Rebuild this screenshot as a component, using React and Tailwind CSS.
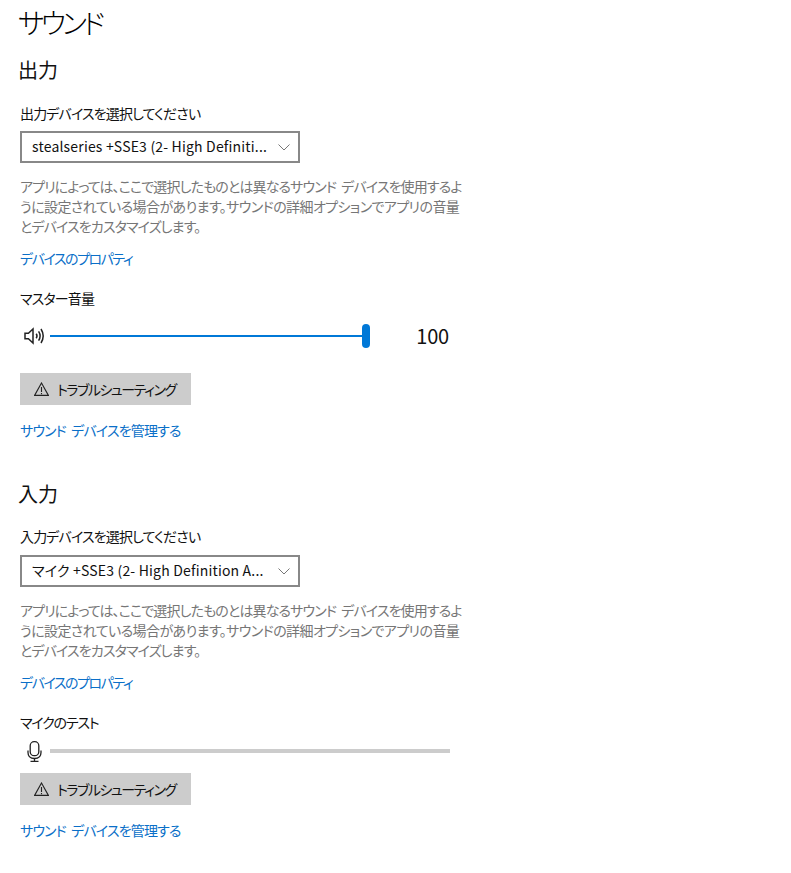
const FONT = "font-['Noto_Sans_CJK_JP','Noto_Sans',sans-serif] [font-feature-settings:'palt']";

function Chevron() {
  return (
    <svg width="12" height="7" viewBox="0 0 12 7" fill="none" stroke="#777777" strokeWidth="1">
      <path d="M0.5 0.5 L6 6 L11.5 0.5" />
    </svg>
  );
}

function Speaker() {
  return (
    <svg width="21" height="18" viewBox="0 0 21 18" fill="none" stroke="#222222" strokeWidth="1.5">
      <path d="M1 6.2 H4.4 L9 2 V16 L4.4 11.8 H1 Z" />
      <path d="M12.2 6.8 Q13.8 9 12.2 11.2" />
      <path d="M14.6 4.4 Q17.6 9 14.6 13.6" />
      <path d="M17 2 Q21.4 9 17 16" />
    </svg>
  );
}

function Mic() {
  return (
    <svg width="15" height="21" viewBox="0 0 15 21" fill="none" stroke="#222222" strokeWidth="1.3">
      <rect x="3.2" y="0.7" width="8.6" height="14" rx="4" />
      <path d="M1 9.5 V11.5 Q1 17.5 7.5 17.5 Q14 17.5 14 11.5 V9.5" />
      <path d="M7.5 17.5 V20.3 M3.5 20.3 H11.5" />
    </svg>
  );
}

function Warning() {
  return (
    <svg width="15" height="14" viewBox="0 0 15 14" fill="none" stroke="#222222" strokeWidth="1.1">
      <path d="M7.5 1 L14.4 13.4 H0.6 Z" strokeLinejoin="miter" />
      <path d="M7.5 5 V10 M7.5 11 V12.2" />
    </svg>
  );
}

function Select({ text, className }) {
  return (
    <div className={`flex h-8 w-[280px] items-center justify-between border-2 border-[#888888] bg-white pl-[10px] pr-[8px] ${className}`}>
      <span className="whitespace-nowrap pb-[2px] text-[14px] leading-5 tracking-[0.18px] text-[#111111]">{text}</span>
      <Chevron />
    </div>
  );
}

function Help() {
  return (
    <p className="mt-[13px] w-[460px] whitespace-nowrap text-[14px] leading-5 tracking-[-0.88px] text-[#767676] [word-spacing:3px]">
      アプリによっては、ここで選択したものとは異なるサウンド デバイスを使用するよ
      <br />
      <span className="tracking-[-0.58px]">うに設定されている場合があります。サウンドの詳細オプションでアプリの音量</span>
      <br />
      とデバイスをカスタマイズします。
    </p>
  );
}

function TroubleButton() {
  return (
    <div className="flex h-8 w-[171px] items-center gap-[8px] bg-[#cccccc] pl-[14px] text-[14px] text-[#111111]">
      <Warning />
      <span className="whitespace-nowrap tracking-[-1.45px]">トラブルシューティング</span>
    </div>
  );
}

function Link({ children, className }) {
  return <a className={`block whitespace-nowrap text-[14px] leading-5 text-[#0a6fc8] ${className}`}>{children}</a>;
}

function Label({ children, className }) {
  return <div className={`text-[14px] leading-5 tracking-[-0.85px] text-[#111111] ${className}`}>{children}</div>;
}

export default function App() {
  return (
    <div className={`${FONT} h-[873px] w-[791px] overflow-hidden bg-white pl-5`}>
      <h1 className="-ml-[2px] h-[44px] pt-[2px] text-[28px] leading-10 font-light tracking-[-3.8px] text-black">サウンド</h1>
      <h2 className="-ml-[2px] mt-[12px] text-[20px] leading-7 text-[#111111]">出力</h2>
      <Label className="mt-[19px]">出力デバイスを選択してください</Label>
      <Select className="mt-[8px]" text="stealseries +SSE3 (2- High Definiti..." />
      <Help />
      <Link className="mt-[12px] tracking-[-1.45px]">デバイスのプロパティ</Link>
      <Label className="mt-[20px]">マスター音量</Label>

      <div className="mt-[16px] flex h-[24px] w-[429px] items-center">
        <div className="ml-[4px] flex w-[26px] shrink-0">
          <Speaker />
        </div>
        <div className="relative h-[2px] w-[320px] bg-[#0078d7]">
          <div className="absolute top-[-11px] right-0 h-6 w-2 rounded-full bg-[#0078d7]" />
        </div>
        <span className="ml-auto text-[20px] leading-6 tracking-[-0.2px] text-[#111111]">100</span>
      </div>

      <div className="mt-[25px]"><TroubleButton /></div>
      <Link className="mt-[15px] tracking-[-0.85px] [word-spacing:3px]">サウンド デバイスを管理する</Link>

      <h2 className="-ml-[2px] mt-[40px] text-[20px] leading-7 text-[#111111]">入力</h2>
      <Label className="mt-[18px]">入力デバイスを選択してください</Label>
      <Select className="mt-[9px]" text="マイク +SSE3 (2- High Definition A..." />
      <Help />
      <Link className="mt-[12px] tracking-[-1.45px]">デバイスのプロパティ</Link>
      <Label className="mt-[20px] tracking-[-1.2px]">マイクのテスト</Label>

      <div className="mt-[7px] flex h-[24px] w-[430px] items-center">
        <div className="ml-[7px] flex w-[23px] shrink-0">
          <Mic />
        </div>
        <div className="h-1 w-[400px] bg-[#cccccc]" />
      </div>

      <div className="mt-[10px]"><TroubleButton /></div>
      <Link className="mt-[15px] tracking-[-0.85px] [word-spacing:3px]">サウンド デバイスを管理する</Link>
    </div>
  );
}
